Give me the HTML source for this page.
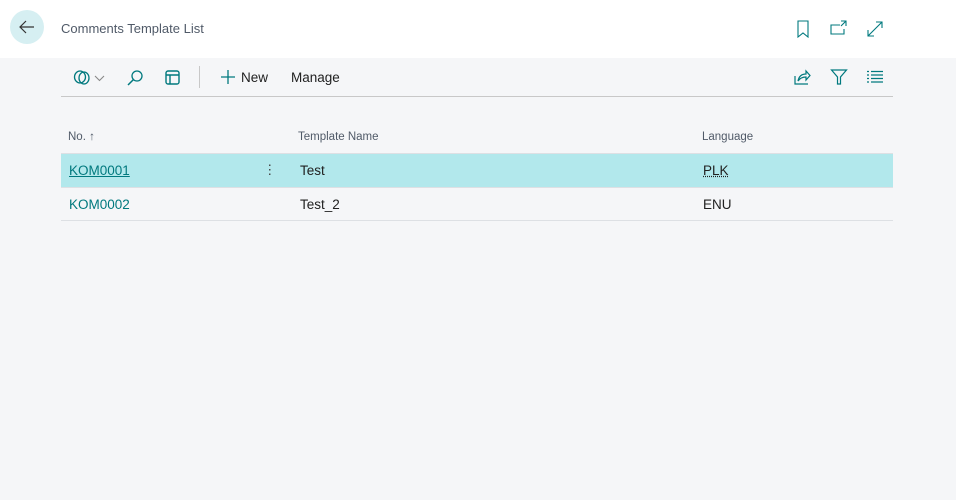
<!DOCTYPE html>
<html><head><meta charset="utf-8"><style>
*{margin:0;padding:0;box-sizing:border-box}
body{width:956px;height:500px;background:#f5f6f8;font-family:"Liberation Sans",sans-serif;position:relative;overflow:hidden;color:#212121}
.hdr{position:absolute;left:0;top:0;width:956px;height:58px;background:#fff}
.back{position:absolute;left:10px;top:10px;width:34px;height:34px;border-radius:50%;background:#d6eff2}
.title{position:absolute;left:61px;top:21px;font-size:13px;color:#505a68}
svg{position:absolute}
.tb{position:absolute;top:70px;font-size:13.5px;color:#212121}
.line{position:absolute;left:61px;width:832px;height:1px;background:#c8c8c8}
.th{position:absolute;top:131px;font-size:11.5px;color:#505a68}
.r1{position:absolute;left:61px;top:154px;width:832px;height:33px;background:#b2e8ec}
.cell{position:absolute;font-size:13.5px}
a{color:#00797e}
</style></head><body>
<div class="hdr">
<div class="back"></div>
<svg style="left:17px;top:17px" width="20" height="20" viewBox="0 0 20 20"><path d="M17 10H3M9 4L3 10L9 16" fill="none" stroke="#333" stroke-width="1.2"/></svg>
<div class="title">Comments Template List</div>
<svg style="left:796px;top:20px" width="14" height="18" viewBox="0 0 14 18"><path d="M2 1H12V17L7 13L2 17Z" fill="none" stroke="#00797e" stroke-width="1.1"/></svg>
<svg style="left:830px;top:20px" width="18" height="16" viewBox="0 0 18 16"><path d="M10 5H1V14H14V9M11 1H16V6M16 1L11 6" fill="none" stroke="#00797e" stroke-width="1.1"/></svg>
<svg style="left:866px;top:20px" width="18" height="18" viewBox="0 0 18 18"><path d="M2 16L16 2M10 2H16V8M2 10V16H8" fill="none" stroke="#00797e" stroke-width="1.1"/></svg>
</div>
<svg style="left:73px;top:69px" width="34" height="18" viewBox="0 0 34 18"><ellipse cx="7" cy="8" rx="5.5" ry="6" fill="none" stroke="#00797e" stroke-width="1.3"/><ellipse cx="11" cy="9" rx="5" ry="6" fill="none" stroke="#00797e" stroke-width="1.3"/><path d="M22 7L26.5 11.5L31 7" fill="none" stroke="#888" stroke-width="1.1"/></svg>
<svg style="left:126px;top:69px" width="18" height="18" viewBox="0 0 18 18"><circle cx="11" cy="7" r="5" fill="none" stroke="#00797e" stroke-width="1.3"/><path d="M7.5 10.5L2 16" stroke="#00797e" stroke-width="1.5"/></svg>
<svg style="left:164px;top:69px" width="18" height="18" viewBox="0 0 18 18"><rect x="2" y="2" width="13" height="13" rx="2" fill="none" stroke="#00797e" stroke-width="1.4"/><path d="M2 6H15M6 6V15" stroke="#00797e" stroke-width="1.4"/></svg>
<div style="position:absolute;left:199px;top:66px;width:1px;height:22px;background:#c8c8c8"></div>
<svg style="left:220px;top:69px" width="16" height="16" viewBox="0 0 16 16"><path d="M8 1V15M1 8H15" stroke="#00797e" stroke-width="1.3"/></svg>
<div class="tb" style="left:241px">New</div>
<div class="tb" style="left:291px">Manage</div>
<svg style="left:793px;top:68px" width="18" height="18" viewBox="0 0 18 18"><path d="M2 8V16H15M5 13C6 8 9 6 13 6V3L17 7.5L13 12V9C10 9 7 10 5 13Z" fill="none" stroke="#00797e" stroke-width="1.2"/></svg>
<svg style="left:830px;top:68px" width="18" height="18" viewBox="0 0 18 18"><path d="M1.5 2H16.5L10.5 9V16H7.5V9Z" fill="none" stroke="#00797e" stroke-width="1.2"/></svg>
<svg style="left:867px;top:70px" width="16" height="14" viewBox="0 0 16 14"><path d="M0 1.5H2M4 1.5H16M0 5H2M4 5H16M0 8.5H2M4 8.5H16M0 12H2M4 12H16" stroke="#00797e" stroke-width="1.2"/></svg>
<div class="line" style="top:96px"></div>
<div class="th" style="left:68px">No. ↑</div>
<div class="th" style="left:298px">Template Name</div>
<div class="th" style="left:702px">Language</div>
<div class="line" style="top:153px;background:#dde0e4"></div>
<div class="r1"></div>
<div class="cell" style="left:69px;top:163px"><a style="text-decoration:underline">KOM0001</a></div>
<div class="cell" style="left:263px;top:162px;color:#444">⋮</div>
<div class="cell" style="left:300px;top:163px">Test</div>
<div class="cell" style="left:703px;top:163px;text-decoration:underline dotted">PLK</div>
<div class="line" style="top:187px;background:#dde0e4"></div>
<div class="cell" style="left:69px;top:197px"><a style="text-decoration:none">KOM0002</a></div>
<div class="cell" style="left:300px;top:197px">Test_2</div>
<div class="cell" style="left:703px;top:197px">ENU</div>
<div class="line" style="top:220px;background:#dde0e4"></div>
</body></html>
